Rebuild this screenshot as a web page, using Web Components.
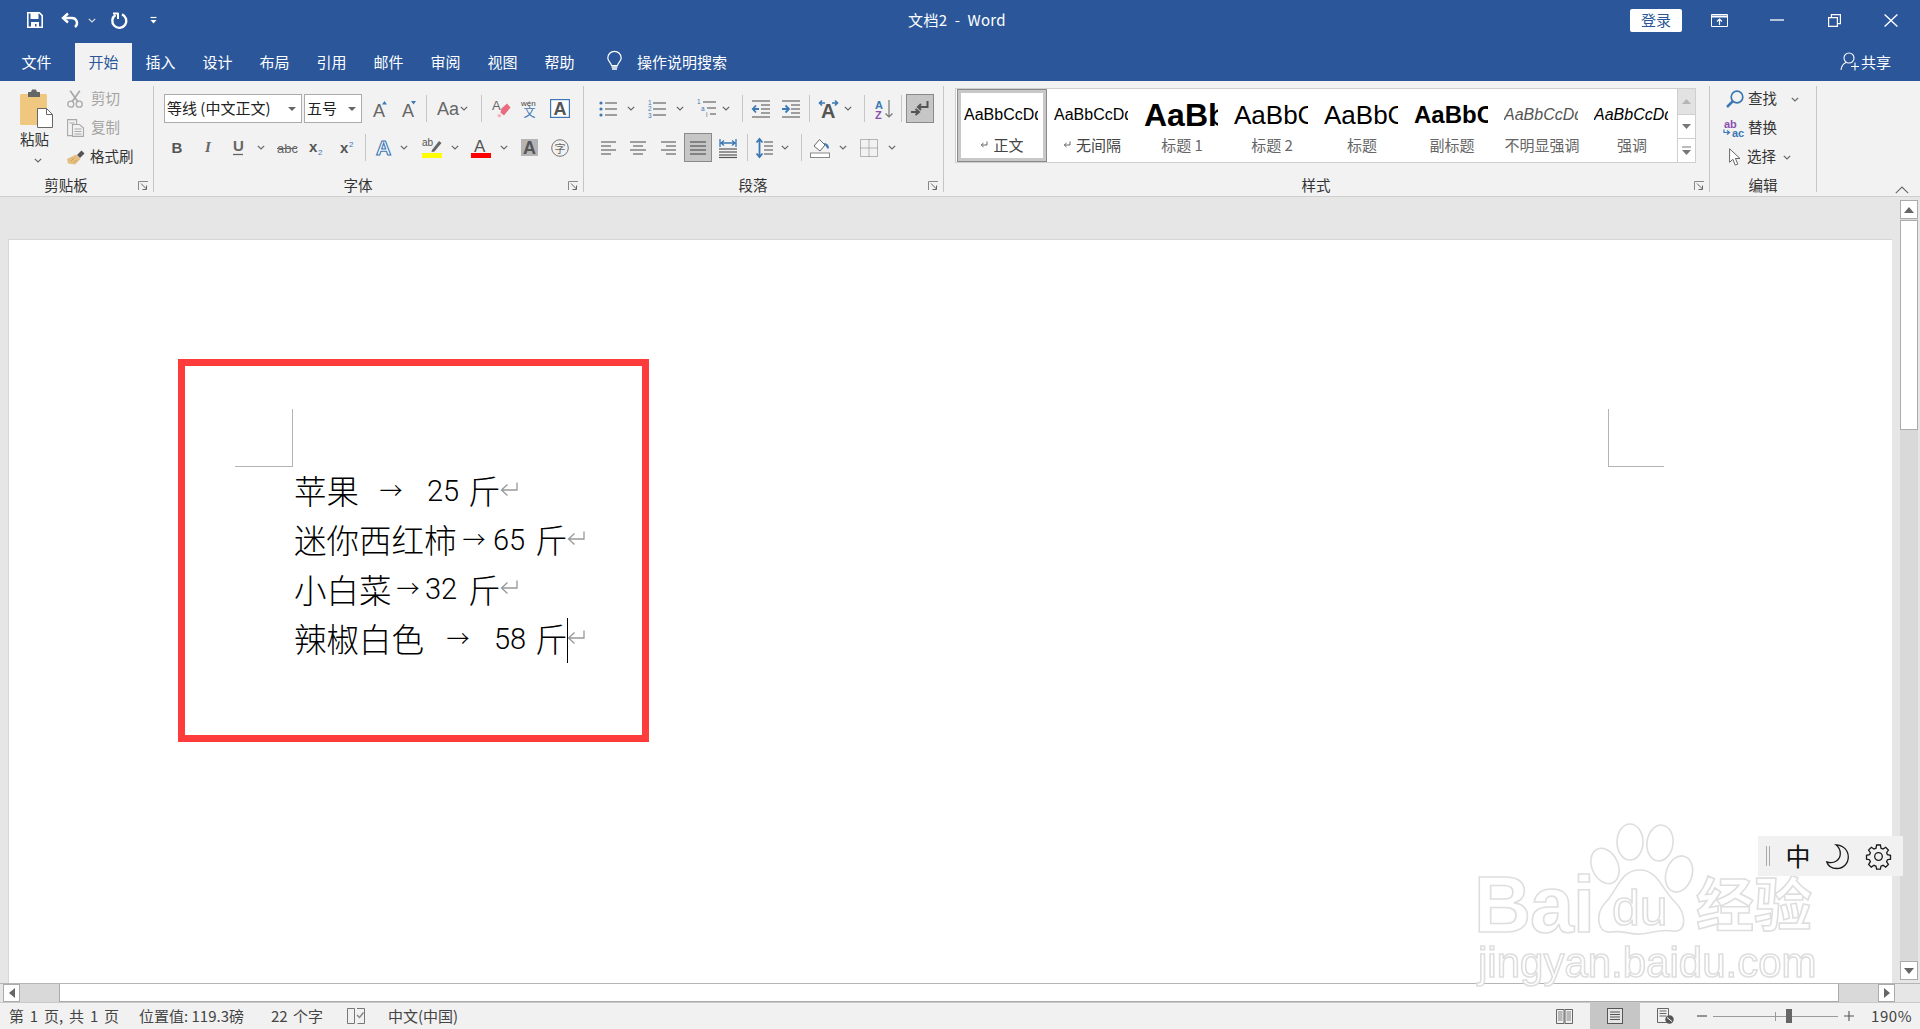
<!DOCTYPE html>
<html lang="zh"><head><meta charset="utf-8"><title>文档2 - Word</title>
<style>html,body{margin:0;height:100%;overflow:hidden;background:#e6e6e6;font-family:"Noto Sans CJK SC","Liberation Sans",sans-serif}</style>
</head><body>
<wd-app></wd-app>
<script>
const UI='"Noto Sans CJK SC","Liberation Sans",sans-serif';
const BASE=`*{box-sizing:border-box}
.row{display:flex;align-items:center;white-space:nowrap}
.it{display:flex;align-items:center;justify-content:center;flex:none;height:100%;white-space:nowrap}
.l{justify-content:flex-start}
svg{display:block;flex:none;overflow:visible}
.sep{display:block;width:1px;height:27px;background:#c6c6c6}`;
const row=(x0,items,cls='')=>{let c=x0,s='';for(const [x,w,h,k] of items){s+=`<span class="it ${k||''}" style="margin-left:${x-c}px;width:${w}px">${h}</span>`;c=x+w}return `<div class="row ${cls}">${s}</div>`};
const svg=(w,h,b)=>`<svg width="${w}" height="${h}" viewBox="0 0 ${w} ${h}">${b}</svg>`;
const G='#666',B='#3b78b4';
const chev=(c=G)=>svg(8,5,`<path d="M.8.8 4 4 7.2.8" fill="none" stroke="${c}" stroke-width="1.2"/>`);
const lines=(x,ys,w,c=G,sw=1.2)=>ys.map((y,i)=>{const xx=Array.isArray(x)?x[i]:x,ww=Array.isArray(w)?w[i]:w;return `<path d="M${xx} ${y}h${ww}" stroke="${c}" stroke-width="${sw}"/>`}).join('');
const T=(x,y,s,t,c=G,extra='')=>`<text x="${x}" y="${y}" font-size="${s}" fill="${c}" font-family="Liberation Sans,sans-serif" ${extra}>${t}</text>`;
const I={
save:svg(16,16,`<path d="M.8.8h11.6l2.8 2.8v11.6H.8z" fill="none" stroke="#fff" stroke-width="1.6"/><path d="M3.5 1h8v6h-8zM4 10h8v5H9.5v-3H8v3H4z" fill="#fff"/>`),
undo:svg(19,16,`<path d="M7 1.5 2 6l5 4.5" fill="none" stroke="#fff" stroke-width="2.4"/><path d="M2.5 6H11a5 5 0 0 1 3 9" fill="none" stroke="#fff" stroke-width="2.4"/>`),
redo:svg(17,17,`<path d="M5.500 3A7 7 0 1 0 12 2.400" fill="none" stroke="#fff" stroke-width="2.400"/><path d="M8 .8V7M8 1.500H3" fill="none" stroke="#fff" stroke-width="2"/>`),
qat:svg(7,7,`<path d="M.5.5h6" stroke="#fff" stroke-width="1.2"/><path d="M.5 3h6L3.500 6.500z" fill="#fff"/>`),
rbn:svg(17,13,`<path d="M.5.5h16v12H.5z" fill="none" stroke="#fff"/><path d="M.5 2.500h16" stroke="#fff" stroke-width="2"/><path d="M8.500 11V5M6 7.500l2.500-2.500L11 7.500" fill="none" stroke="#fff" stroke-width="1.200"/>`),
min:svg(14,2,`<path d="M0 1h14" stroke="#fff" stroke-width="1.300"/>`),
rest:svg(13,13,`<path d="M.6 3.600h8.800v8.800H.6z" fill="none" stroke="#fff" stroke-width="1.200"/><path d="M3.400 3.300V.6h9v9H9.800" fill="none" stroke="#fff" stroke-width="1.200"/>`),
close:svg(14,13,`<path d="M.6.500l12.800 12M13.400.500.6 12.500" stroke="#fff" stroke-width="1.400"/>`),
bulb:svg(15,19,`<path d="M4.500 13.500C4 10.500.8 9.500.8 6a6.700 6.700 0 0 1 13.400 0c0 3.500-3.200 4.500-3.700 7.500z" fill="none" stroke="#fff" stroke-width="1.200"/><path d="M4.500 15h6M5 17h5" stroke="#fff" stroke-width="1.500"/>`),
share:svg(20,19,`<circle cx="9" cy="6" r="5" fill="none" stroke="#fff" stroke-width="1.100"/><path d="M1 18c.5-4 2.500-6.500 5-7.500" fill="none" stroke="#fff" stroke-width="1.100"/><path d="M11 14.500h8M15 10.500v8" stroke="#fff" stroke-width="1.100"/>`),
paste:svg(34,39,`<rect x="0" y="5" width="27" height="31" rx="1.500" fill="#efc77f"/><path d="M8 8V3h3l1-2.500h4L17 3h3v5z" fill="#666"/><path d="M17.500 19.500h9l6 6v13h-15z" fill="#fff" stroke="#666"/><path d="M26.500 19.500v6h6" fill="none" stroke="#666"/>`),
cut:svg(16,18,`<g fill="none" stroke="#a8a8a8" stroke-width="1.300"><circle cx="3.800" cy="14.200" r="3"/><circle cx="12.200" cy="14.200" r="3"/><path d="M5.300 11.500 12.800.8M10.700 11.500 3.200.8" stroke-width="1.700"/></g>`),
copy:svg(17,18,`<g fill="none" stroke="#a8a8a8" stroke-width="1.100"><path d="M.6.600h9v16H.6z"/><path d="M5.500 5.500h7l4 3.500v8.400h-11z" fill="#f2f2f2"/><path d="M2.500 4h5M7.500 10h7M7.500 12.500h7M7.500 15h7"/></g>`),
brush:svg(18,15,`<path d="M10 5 14.500.6l3 2.800L13 8z" fill="#555"/><path d="M9 4.500 13.500 9 8 14.500 1 13.500 0 9z" fill="#e5bd7f"/><path d="M4 11l3-3M7 12.500 9.500 10" stroke="#c79d5a"/>`),
grow:svg(15,16,`${T(0,16,18,'A')}<path d="M9 3.500 11.500 0 14 3.500z" fill="${B}"/>`),
shrink:svg(15,16,`${T(0,16,18,'A')}<path d="M9 0 11.500 3.500 14 0z" fill="${B}"/>`),
aa:svg(18,16,T(0,14,18,'Aa')),
erase:svg(19,19,`${T(0,11,13,'A')}<path d="M9.500 9.500 15 4.500l3.500 4-6.500 8-3.500-3z" fill="#ea6b7d"/><path d="M7 14.500 5 17l2.500 1.800 2-2.300z" fill="#f3b3bd"/>`),
wen:svg(17,19,`${T(0,6.500,8,'wén','#444')}<text x="2.500" y="18" font-size="12" fill="${B}" font-family="Noto Sans CJK SC">文</text>`),
abox:svg(20,19,`<rect x=".6" y=".6" width="18.800" height="17.800" fill="#fff" stroke="${B}" stroke-width="1.200"/>${T(3.500,16,18,'A','#555','font-weight="700"')}`),
bold:`<span style="font:700 15px 'Liberation Sans';color:#555">B</span>`,
ital:`<span style="font:italic 700 15px 'Liberation Serif';color:#666">I</span>`,
und:svg(10,17,`${T(0,12,15,'U','#666','font-weight="700"')}<path d="M0 15.500h10" stroke="#666" stroke-width="1.300"/>`),
strike:svg(20,12,`${T(0,11,13,'abc','#666')}<path d="M0 6.500h20" stroke="#666"/>`),
sub:svg(15,15,`${T(0,12,15,'x','#555','font-weight="700"')}${T(9,15,8,'2',B)}`),
sup:svg(15,15,`${T(0,13,15,'x','#555','font-weight="700"')}${T(9,7,8,'2',B)}`),
aglow:svg(16,19,`<text x="0" y="17" font-size="21" fill="#fff" stroke="${B}" stroke-width="1.100" font-family="Liberation Sans" font-weight="700">A</text>`),
hi:svg(20,20,`${T(0,8,10,'ab','#555')}<path d="M10 12 17 3l2.500 2-7 8.500-3 .500z" fill="#666"/><rect y="15" width="20" height="5" fill="#ff0"/>`),
col:svg(20,20,`${T(3,13.500,17,'A','#555','font-weight="400"')}<rect y="15" width="20" height="5" fill="#f00"/>`),
shade:svg(17,17,`<rect width="17" height="17" fill="#b4b4b4"/>${T(2,15,18,'A','#555','font-weight="700"')}`),
ring:svg(18,18,`<circle cx="9" cy="9" r="8.300" fill="none" stroke="#777" stroke-width="1"/><text x="3.500" y="13.500" font-size="11" fill="#666" font-family="Noto Sans CJK SC">字</text>`),
bul:svg(18,18,`<g fill="${B}"><circle cx="2" cy="3" r="1.600"/><circle cx="2" cy="9" r="1.600"/><circle cx="2" cy="15" r="1.600"/></g>${lines(6,[3,9,15],12)}`),
num:svg(18,18,`${T(0,5,6.500,'1',B)}${T(0,11,6.500,'2',B)}${T(0,17.500,6.500,'3',B)}${lines(5,[3,9,15],13)}`),
multi:svg(19,19,`${T(0,5,6.500,'1',B)}${T(4,11.500,6.500,'a',B)}${T(9,18,6.500,'i',G)}${lines([6,10,13],[3,9,15],[13,9,6])}`),
outd:svg(18,18,`${lines(0,[1,17],18)}${lines(9,[5,9,13],9)}<path d="M7 9H1M4 5.500 .8 9 4 12.500" fill="none" stroke="${B}" stroke-width="1.800"/>`),
ind:svg(18,18,`${lines(0,[1,17],18)}${lines(9,[5,9,13],9)}<path d="M0 9h6M3.500 5.500 7 9l-3.500 3.500" fill="none" stroke="${B}" stroke-width="1.800"/>`),
asian:svg(19,18,`<path d="M0 3h6M3 .5.500 3 3 5.500M19 3h-6M16 .5 18.500 3 16 5.500" fill="none" stroke="${B}" stroke-width="1.600"/>${T(2,18,20,'A','#555','font-weight="700"')}`),
sort:svg(18,20,`<text x="0" y="9.500" font-size="11" fill="${B}" font-family="Liberation Sans" font-weight="700">A</text><text x="0" y="20" font-size="11" fill="#8a4fb0" font-family="Liberation Sans" font-weight="700">Z</text><path d="M14 1v17M10.500 14.500 14 18l3.500-3.500" fill="none" stroke="#777" stroke-width="1.200"/>`),
pil:svg(18,16,`<path d="M16.500 0v6H7M10 3 7 6l3 3" fill="none" stroke="#555" stroke-width="2"/><path d="M0 11h7M4.500 8 8 11l-3.500 3" fill="none" stroke="#555" stroke-width="2"/>`),
al:svg(15,14,lines(0,[1,5,9,13],[15,10,15,10])),
ac:svg(16,14,lines([0,3,0,3],[1,5,9,13],[16,10,16,10])),
ar:svg(15,14,lines([0,5,0,5],[1,5,9,13],[15,10,15,10])),
aj:svg(16,14,lines(0,[1,5,9,13],16,'#555')),
dist:svg(18,20,`<path d="M1 1v8M17 1v8M2 5h14M5 2.500 2 5l3 2.500M13 2.500 16 5l-3 2.500" fill="none" stroke="${B}" stroke-width="1.300"/>${lines(0,[11,14,17,19.500],18,'#555')}`),
ls:svg(17,20,`<path d="M3.500 1v18M.5 4.500 3.500 1l3 3.500M.5 15.500 3.500 19l3-3.500" fill="none" stroke="${B}" stroke-width="1.800"/>${lines(8,[4,8,12,16],9)}`),
fill:svg(20,20,`<path d="M4 8 9.500 1.500 15 7l-5 6z" fill="#fff" stroke="#666"/><path d="M14 5c3 0 5 2.500 5 5-1 1-1.500 1-2 0z" fill="${B}"/><rect x=".5" y="15" width="19" height="4.500" fill="#fff" stroke="#888"/>`),
bord:svg(18,18,`<path d="M.5.5h17v17H.5zM9 .5v17M.5 9h17" fill="none" stroke="#777" stroke-dasharray="1 1"/>`),
find:svg(18,18,`<circle cx="11" cy="7" r="5.800" fill="none" stroke="${B}" stroke-width="1.700"/><path d="M7 11 1 17" stroke="${B}" stroke-width="2.500"/>`),
repl:svg(21,18,`<text x="1" y="8.500" font-size="11" fill="#8a4fb0" font-family="Liberation Sans" font-weight="700">ab</text><text x="9" y="17.500" font-size="11" fill="${B}" font-family="Liberation Sans" font-weight="700">ac</text><path d="M1 10.500v3h5M4 11.500l2.500 2-2.500 2" fill="none" stroke="${B}" stroke-width="1.200"/>`),
sel:svg(12,18,`<path d="M.6.800v13.500l3.300-3 2.300 5.800 2.600-1-2.400-5.600H11z" fill="#fff" stroke="#666"/>`),
lnch:svg(11,10,`<path d="M.5 9V.5H10" fill="none" stroke="#888"/><path d="M3 2.500 8.500 8M8.500 4.500V8.500H4.500" fill="none" stroke="#666"/>`),
coll:svg(14,8,`<path d="M.8 7.200 7 1l6.200 6.200" fill="none" stroke="#666" stroke-width="1.100"/>`),
ret:svg(18,16,`<path d="M17 .5V8H2M7.500 2.500 1.500 8l6 5.500" fill="none" stroke="#999" stroke-width="1.300"/>`),
retS:svg(8,7,`<path d="M7 .5v3.500H1.500M3.500 2 1.200 4l2.300 2" fill="none" stroke="#666"/>`),
bookchk:svg(18,16,`<path d="M.5.500h7v15h-7zM10 .5h7.500v15h-7" fill="none" stroke="#777"/><path d="M10 7l2.500 2.500 4-5" fill="none" stroke="#888" stroke-width="1.500"/>`),
read:svg(17,15,`<path d="M.5.500h7.500v14H.5zM9 .5h7.500v14H9z" fill="none" stroke="#666"/>${lines(2,[3,5,7,9,11],4.500,'#666',.8)}${lines(10.500,[3,5,7,9,11],4.500,'#666',.8)}`),
print:svg(16,16,`<rect x=".5" y=".5" width="15" height="15" fill="#e4e4e4" stroke="#555"/>${lines(3,[4,6.500,9,11.500],10,'#555',1)}`),
web:svg(17,16,`<path d="M.5.500h11v14H.5z" fill="none" stroke="#666"/>${lines(2.500,[3,5.500,8],7,'#666',1)}<circle cx="12.500" cy="11.500" r="4.200" fill="#555"/><path d="M10 9.500l5 4" stroke="#fff"/>`),
moon:svg(23,25,`<path d="M10 .8C17 1 22.300 6 22.300 13c0 6.500-5 11.500-11.500 11.500C6 24.500 2 22 .8 18c7.500 2 13.500-2 13.500-8.500C14.300 6 12.800 3 10 .8z" fill="none" stroke="#1a1a1a" stroke-width="1.300"/>`),
gear:svg(25,25,`<g fill="none" stroke="#1a1a1a" stroke-width="1.300"><circle cx="12.500" cy="12.500" r="3.800"/><path d="M10.600 1h3.800l.6 3.200 2 .9 2.700-1.800 2.700 2.700-1.800 2.700.9 2 3 .6v3.800l-3 .6-.9 2 1.800 2.700-2.700 2.700-2.700-1.800-2 .9-.6 3h-3.800l-.6-3-2-.9-2.700 1.800-2.700-2.700 1.800-2.700-.9-2-3-.6v-3.800l3-.6.9-2-1.800-2.700 2.700-2.700 2.700 1.800 2-.9z"/></g>`)
};
function def(name,css,html){customElements.define(name,class extends HTMLElement{connectedCallback(){if(this.shadowRoot)return;const r=this.attachShadow({mode:'open'});r.innerHTML=`<style>${BASE}${css}</style>${typeof html==='function'?html(this):html}`;}})}

def('wd-titlebar',`:host{display:block;height:43px;background:#2b579a;color:#fff;font:15px ${UI}}
.row{height:40px}.t{letter-spacing:.3px;margin-top:-2px}.login{display:flex;width:52px;height:23px;background:#fff;color:#2b579a;border-radius:2px;align-items:center;justify-content:center;font-size:15px;padding-bottom:1px}`,
row(0,[[27,16,I.save],[61,19,I.undo],[88,8,chev('#ddd')],[110,17,I.redo],[150,7,I.qat],[906,102,'<span class="t">文档2&nbsp; -&nbsp; Word</span>'],[1630,52,'<span class="login">登录</span>'],[1711,17,I.rbn],[1770,14,I.min],[1828,13,I.rest],[1884,14,I.close]]));

def('wd-tabs',`:host{display:block;height:38px;background:#2b579a;color:#fff;font:15px ${UI}}
.row{height:38px}.it{padding-bottom:2px}.on{background:#f2f2f2;color:#2b579a;height:38px}`,
row(0,[[8,57,'文件'],[75,57,'开始','on'],...['插入','设计','布局','引用','邮件','审阅','视图','帮助'].map((t,i)=>[132+i*57,57,t]),[607,15,I.bulb],[637,92,'操作说明搜索','l'],[1840,20,I.share],[1861,32,'共享','l']]));

def('wd-group',`:host{display:block;flex:none;height:106px;border-right:1px solid #c6c6c6;position:relative}
.box{display:flex;flex-direction:column;height:100%}.c{flex:1;min-height:0}
.lb{height:14px;line-height:14px;text-align:center;font-size:14.500px;color:#333;margin-bottom:0}
.ln{position:absolute;right:4px;bottom:1px}:host([launcher]) .lb{padding-right:21px}`,
h=>`<div class="box"><div class="c"><slot></slot></div><div class="lb">${h.getAttribute('label')}</div>${h.hasAttribute('launcher')?`<span class="ln">${I.lnch}</span>`:''}</div>`);

def('wd-style-item',`:host{display:block;flex:none;width:90px;height:73px;background:#fff;overflow:hidden}
.p{height:44px;margin:4px 7px 0 7px;width:74px;overflow:hidden;display:flex;align-items:center;white-space:nowrap;color:#000;font-family:"Liberation Sans",sans-serif}
.n{height:14px;display:flex;align-items:center;justify-content:center;gap:5px;font-size:15px;color:#666;white-space:nowrap}
:host([sel]){box-shadow:inset 0 0 0 1px #8a8a8a,inset 0 0 0 4px #c8c8c8}:host([sel]) .n{color:#444}:host([dark]) .n{color:#444}`,
h=>`<div class="p" style="${h.getAttribute('pv')}">${h.getAttribute('text')}</div><div class="n">${h.hasAttribute('ret')?I.retS:''}<span>${h.getAttribute('name')}</span></div>`);

const smallRow=(x0,ix,iw,icon,tx,tw,t,gray,ch)=>row(x0,[[ix,iw,icon],[tx,tw,`<span style="color:${gray?'#a3a3a3':'#333'};margin-bottom:4px">${t}</span>`,'l'],...(ch?[[ch,8,chev()]]:[])],'s');
const combo=(w,t)=>`<span class="combo" style="width:${w}px"><span style="margin-bottom:2px">${t}</span><svg width="8" height="4" viewBox="0 0 8 4"><path d="M0 0h8L4 4z" fill="#666"/></svg></span>`;
const sep=`<i class="sep"></i>`;
def('wd-ribbon',`:host{display:flex;height:116px;padding-top:5px;background:#f2f2f2;border-bottom:1px solid #cfcfcf;font:14.500px ${UI};color:#333;position:relative}
.two{display:flex;flex-direction:column;gap:10px;padding-top:8px}.two .row{height:29px}
.three{display:flex;flex-direction:column;gap:3px}.three .s{height:26px}
.clip{display:flex}.pc{width:36px;margin-left:20px;display:flex;flex-direction:column;padding-top:3px;height:92px}
.pc .lab{margin-top:0;height:21px;line-height:21px;width:32px}.pc .ch{margin:9px 0 0 14px}
.combo{height:29px;background:#fff;border:1px solid #ababab;display:flex;align-items:center;justify-content:space-between;padding:0 5px 0 2px;font-size:15px;color:#222;flex:none}
.on{height:29px;display:flex;align-items:center;justify-content:center;background:#c6c6c6;border:1px solid #8a8a8a;width:100%}
.gal{display:flex;margin:2px 0 0 11px;width:741px;height:75px;border:1px solid #cfcfcf;background:#fff;padding-left:1px}
.gs{width:18px;flex:none;margin-left:0;display:flex;flex-direction:column;border-left:1px solid #cfcfcf}
.gs span{display:flex;align-items:center;justify-content:center;background:#fff;border-bottom:1px solid #cfcfcf}
.gs span:first-child{height:26px;background:#e2e2e2}.gs span:nth-child(2){height:24px}.gs span:nth-child(3){flex:1;border:0}
.coll{position:absolute;left:1895px;top:105px}`,
`<wd-group label="剪贴板" launcher style="width:154px"><div class="clip"><div class="pc">${I.paste}<span class="lab">粘贴</span><span class="ch">${chev()}</span></div>
<div class="three">${smallRow(56,67,16,I.cut,91,30,'剪切',1)}${smallRow(56,67,17,I.copy,91,30,'复制',1)}${smallRow(56,67,18,I.brush,90,46,'格式刷')}</div></div></wd-group>
<wd-group label="字体" launcher style="width:430px"><div class="two">
${row(154,[[164,138,combo(138,'等线 (中文正文)')],[304,58,combo(58,'五号')],[373,15,I.grow],[402,15,I.shrink],[426,1,sep],[437,18,I.aa],[460,8,chev()],[481,1,sep],[492,19,I.erase],[521,17,I.wen],[550,20,I.abox]])}
${row(154,[[172,10,I.bold],[204,8,I.ital],[233,10,I.und],[257,8,chev()],[277,20,I.strike],[309,15,I.sub],[340,15,I.sup],[365,1,sep],[376,16,I.aglow],[400,8,chev()],[422,20,I.hi],[451,8,chev()],[471,20,I.col],[500,8,chev()],[521,17,I.shade],[551,18,I.ring]])}
</div></wd-group>
<wd-group label="段落" launcher style="width:360px"><div class="two">
${row(584,[[599,18,I.bul],[627,8,chev()],[648,18,I.num],[676,8,chev()],[697,19,I.multi],[722,8,chev()],[742,1,sep],[752,18,I.outd],[782,18,I.ind],[809,1,sep],[819,19,I.asian],[844,8,chev()],[864,1,sep],[875,18,I.sort],[901,1,sep],[906,28,`<span class="on">${I.pil}</span>`]])}
${row(584,[[601,15,I.al],[630,16,I.ac],[661,15,I.ar],[684,28,`<span class="on">${I.aj}</span>`],[719,18,I.dist],[747,1,sep],[756,17,I.ls],[781,8,chev()],[801,1,sep],[810,20,I.fill],[839,8,chev()],[860,18,I.bord],[888,8,chev()]])}
</div></wd-group>
<wd-group label="样式" launcher style="width:766px"><div class="gal">
<wd-style-item sel text="AaBbCcDd" name="正文" ret pv="font-size:16px"></wd-style-item>
<wd-style-item text="AaBbCcDd" name="无间隔" ret dark pv="font-size:16px"></wd-style-item>
<wd-style-item text="AaBbCc" name="标题 1" pv="font-size:32px;font-weight:700"></wd-style-item>
<wd-style-item text="AaBbCc" name="标题 2" pv="font-size:26px"></wd-style-item>
<wd-style-item text="AaBbCc" name="标题" pv="font-size:26px"></wd-style-item>
<wd-style-item text="AaBbCc" name="副标题" pv="font-size:24px;font-weight:700"></wd-style-item>
<wd-style-item text="AaBbCcDd" name="不明显强调" pv="font-size:16px;font-style:italic;color:#555"></wd-style-item>
<wd-style-item text="AaBbCcDd" name="强调" pv="font-size:16px;font-style:italic"></wd-style-item>
<div class="gs"><span><svg width="9" height="5"><path d="M0 5h9L4.500 0z" fill="#b5b5b5"/></svg></span><span><svg width="9" height="5"><path d="M0 0h9L4.500 5z" fill="#777"/></svg></span><span><svg width="9" height="10"><path d="M0 1h9" stroke="#777"/><path d="M0 4h9L4.500 9z" fill="#777"/></svg></span></div>
</div></wd-group>
<wd-group label="编辑" style="width:107px"><div class="three">
${smallRow(1710,1726,18,I.find,1748,30,'查找',0,1791)}${smallRow(1710,1723,21,I.repl,1748,30,'替换')}${smallRow(1710,1729,12,I.sel,1747,32,'选择',0,1783)}
</div></wd-group><span class="coll">${I.coll}</span>`);

def('wd-vscroll',`:host{display:flex;flex-direction:column;flex:none;width:18px;margin-top:3px;height:780px;background:#d9d9d9}
.b{height:19px;background:#fff;border:1px solid #ababab;display:flex;align-items:center;justify-content:center;flex:none}
.th{height:210px;background:#fff;border:1px solid #ababab;flex:none;margin-top:1px}.f{flex:1}`,
`<div class="b"><svg width="10" height="6"><path d="M0 6h10L5 0z" fill="#666"/></svg></div><div class="th"></div><div class="f"></div><div class="b"><svg width="10" height="6"><path d="M0 0h10L5 6z" fill="#666"/></svg></div>`);

def('wd-hscroll',`:host{display:flex;flex:none;height:19px;background:#e6e6e6;border-top:1px solid #b5b5b5;padding-left:3px}
.b{width:17px;background:#fff;border:1px solid #ababab;display:flex;align-items:center;justify-content:center;flex:none}
.tr{background:#d9d9d9;flex:none}.th{width:1780px;background:#fff;border:1px solid #ababab;border-top:0;flex:none}`,
`<div class="b"><svg width="6" height="10"><path d="M6 0v10L0 5z" fill="#666"/></svg></div><div class="tr" style="width:39px"></div><div class="th"></div><div class="tr" style="width:39px"></div><div class="b"><svg width="6" height="10"><path d="M0 0v10l6-5z" fill="#666"/></svg></div>`);

def('wd-status',`:host{display:block;flex:none;height:27px;background:#f1f1f1;border-top:1px solid #c9c9c9;font:15px ${UI};color:#444}
.row{height:26px}.l{padding-bottom:2px}.on{display:flex;width:50px;height:26px;align-items:center;justify-content:center;background:#c6c6c6}
.sl{position:relative;display:block;width:125px;height:1px;background:#9a9a9a}.sl i{position:absolute}
.tk{left:62px;top:-4px;width:1px;height:9px;background:#9a9a9a}.tb{left:73px;top:-7px;width:6px;height:14px;background:#666}`,
row(0,[[9,115,'<span style="word-spacing:2.500px">第 1 页, 共 1 页</span>','l'],[139,115,'位置值: 119.3磅','l'],[271,60,'<span style="word-spacing:2px">22 个字</span>','l'],[347,18,I.bookchk],[388,72,'中文(中国)','l'],[1556,17,I.read],[1590,50,`<span class="on">${I.print}</span>`],[1657,17,I.web],[1697,10,'<svg width="10" height="2"><path d="M0 1h10" stroke="#555" stroke-width="1.200"/></svg>'],[1713,125,'<span class="sl"><i class="tk"></i><i class="tb"></i></span>'],[1844,10,'<svg width="10" height="10"><path d="M0 5h10M5 0v10" stroke="#555" stroke-width="1.100"/></svg>'],[1871,42,'<span style="letter-spacing:.6px">190%</span>','l']]));

const line=(segs)=>`<div class="ln">`+(()=>{let c=294,s='';for(const [x,w,t,k] of segs){s+=`<span class="${k||''}" style="margin-left:${x-c}px;width:${w}px">${t}</span>`;c=x+w}return s})()+`</div>`;
def('wd-page',`:host{display:block;flex:none;width:1884px;height:745px;background:#fff;border:solid #d6d6d6;border-width:1px 0 0 1px;padding:225px 0 0 285px;position:relative}
.ln{display:flex;height:49.300px;align-items:center;white-space:nowrap;color:#000}
.ln span{display:flex;align-items:center;flex:none;height:100%}
.c{font:300 32.500px ${UI}}.d{font:300 29px Roboto,"Liberation Sans",sans-serif;padding-top:2px}.a{font:300 23px ${UI};justify-content:center;padding-bottom:2px}
.crop{position:absolute}
.cur{position:absolute;left:558px;top:378px;width:1px;height:45px;background:#000}`,
()=>line([[294,66,'苹果','c'],[381,20,'→','a'],[427,32,'25','d'],[468,33,'斤','c'],[500,18,I.ret]])
+line([[294,163,'迷你西红柿','c'],[464,20,'→','a'],[493,32,'65','d'],[535,33,'斤','c'],[567,18,I.ret]])
+line([[294,99,'小白菜','c'],[398,20,'→','a'],[425,32,'32','d'],[468,33,'斤','c'],[500,18,I.ret]])
+line([[294,131,'辣椒白色','c'],[448,20,'→','a'],[494,32,'58','d'],[535,33,'斤','c'],[567,18,I.ret]])
+`<span class="cur"></span>
<span class="crop" style="left:226px;top:169px;width:58px;height:58px;border:solid #b4b4b4;border-width:0 1px 1px 0"></span>
<span class="crop" style="left:1599px;top:169px;width:56px;height:58px;border:solid #b4b4b4;border-width:0 0 1px 1px"></span>`);

def('wd-doc',`:host{display:flex;flex:none;height:786px;background:#e6e6e6;overflow:hidden}
.m{flex:none;width:1892px;padding:42px 0 0 8px}.g{flex:none;width:8px}`,
`<div class="m"><wd-page></wd-page></div><div class="g"></div><wd-vscroll></wd-vscroll>`);

def('wd-redbox',`:host{display:block;position:absolute;left:178px;top:359px;width:471px;height:383px;border:7px solid #ff3b3b;pointer-events:none}`,``);
def('wd-ime',`:host{display:flex;position:absolute;left:1758px;top:836px;width:145px;height:40px;background:#f1f1f1;align-items:center;font:25px ${UI};color:#111}
.grip{width:4px;height:20px;margin-left:8px;border:solid #aaa;border-width:0 1px;flex:none}
.z{margin-left:15px;width:26px;text-align:center;line-height:38px;height:40px}`,
`<span class="grip"></span><span class="z">中</span><span style="margin-left:15px">${I.moon}</span><span style="margin-left:17px">${I.gear}</span>`);
def('wd-watermark',`:host{display:block;position:absolute;left:1470px;top:820px;width:350px;height:175px;pointer-events:none;filter:blur(.45px)}
text,path,ellipse{fill:#fff;stroke:#dedede;stroke-width:1.600px}`,
`<svg width="350" height="175" viewBox="0 0 350 175">
<ellipse cx="135" cy="46" rx="13" ry="18.500" transform="rotate(-25 135 46)"/><ellipse cx="160" cy="22" rx="13" ry="18"/><ellipse cx="190" cy="23" rx="13" ry="18" transform="rotate(8 190 23)"/><ellipse cx="209" cy="54" rx="13" ry="18.500" transform="rotate(18 209 54)"/>
<path d="M170 50c18 0 22 20 35 32 12 12 12 32-3 29-12-2-20 2-31 3-10 1-18-4-30-2-14 2-16-18-6-29 13-13 15-33 35-33z"/>
<text x="4" y="112" font-family="Liberation Sans" font-weight="700" font-size="79" letter-spacing="-1">Bai</text>
<text x="142" y="105" font-family="Liberation Sans" font-size="50">du</text>
<text x="226" y="106" font-family="Noto Sans CJK SC" font-weight="700" font-size="58">经验</text>
<text x="8" y="157" font-family="Liberation Sans" font-size="42">jingyan.baidu.com</text>
</svg>`);

def('wd-app',`:host{display:flex;flex-direction:column;position:relative;width:1920px;height:1029px;overflow:hidden}`,
`<wd-titlebar></wd-titlebar><wd-tabs></wd-tabs><wd-ribbon></wd-ribbon><wd-doc></wd-doc><wd-hscroll></wd-hscroll><wd-status></wd-status><wd-watermark></wd-watermark><wd-redbox></wd-redbox><wd-ime></wd-ime>`);
</script>
</body></html>
